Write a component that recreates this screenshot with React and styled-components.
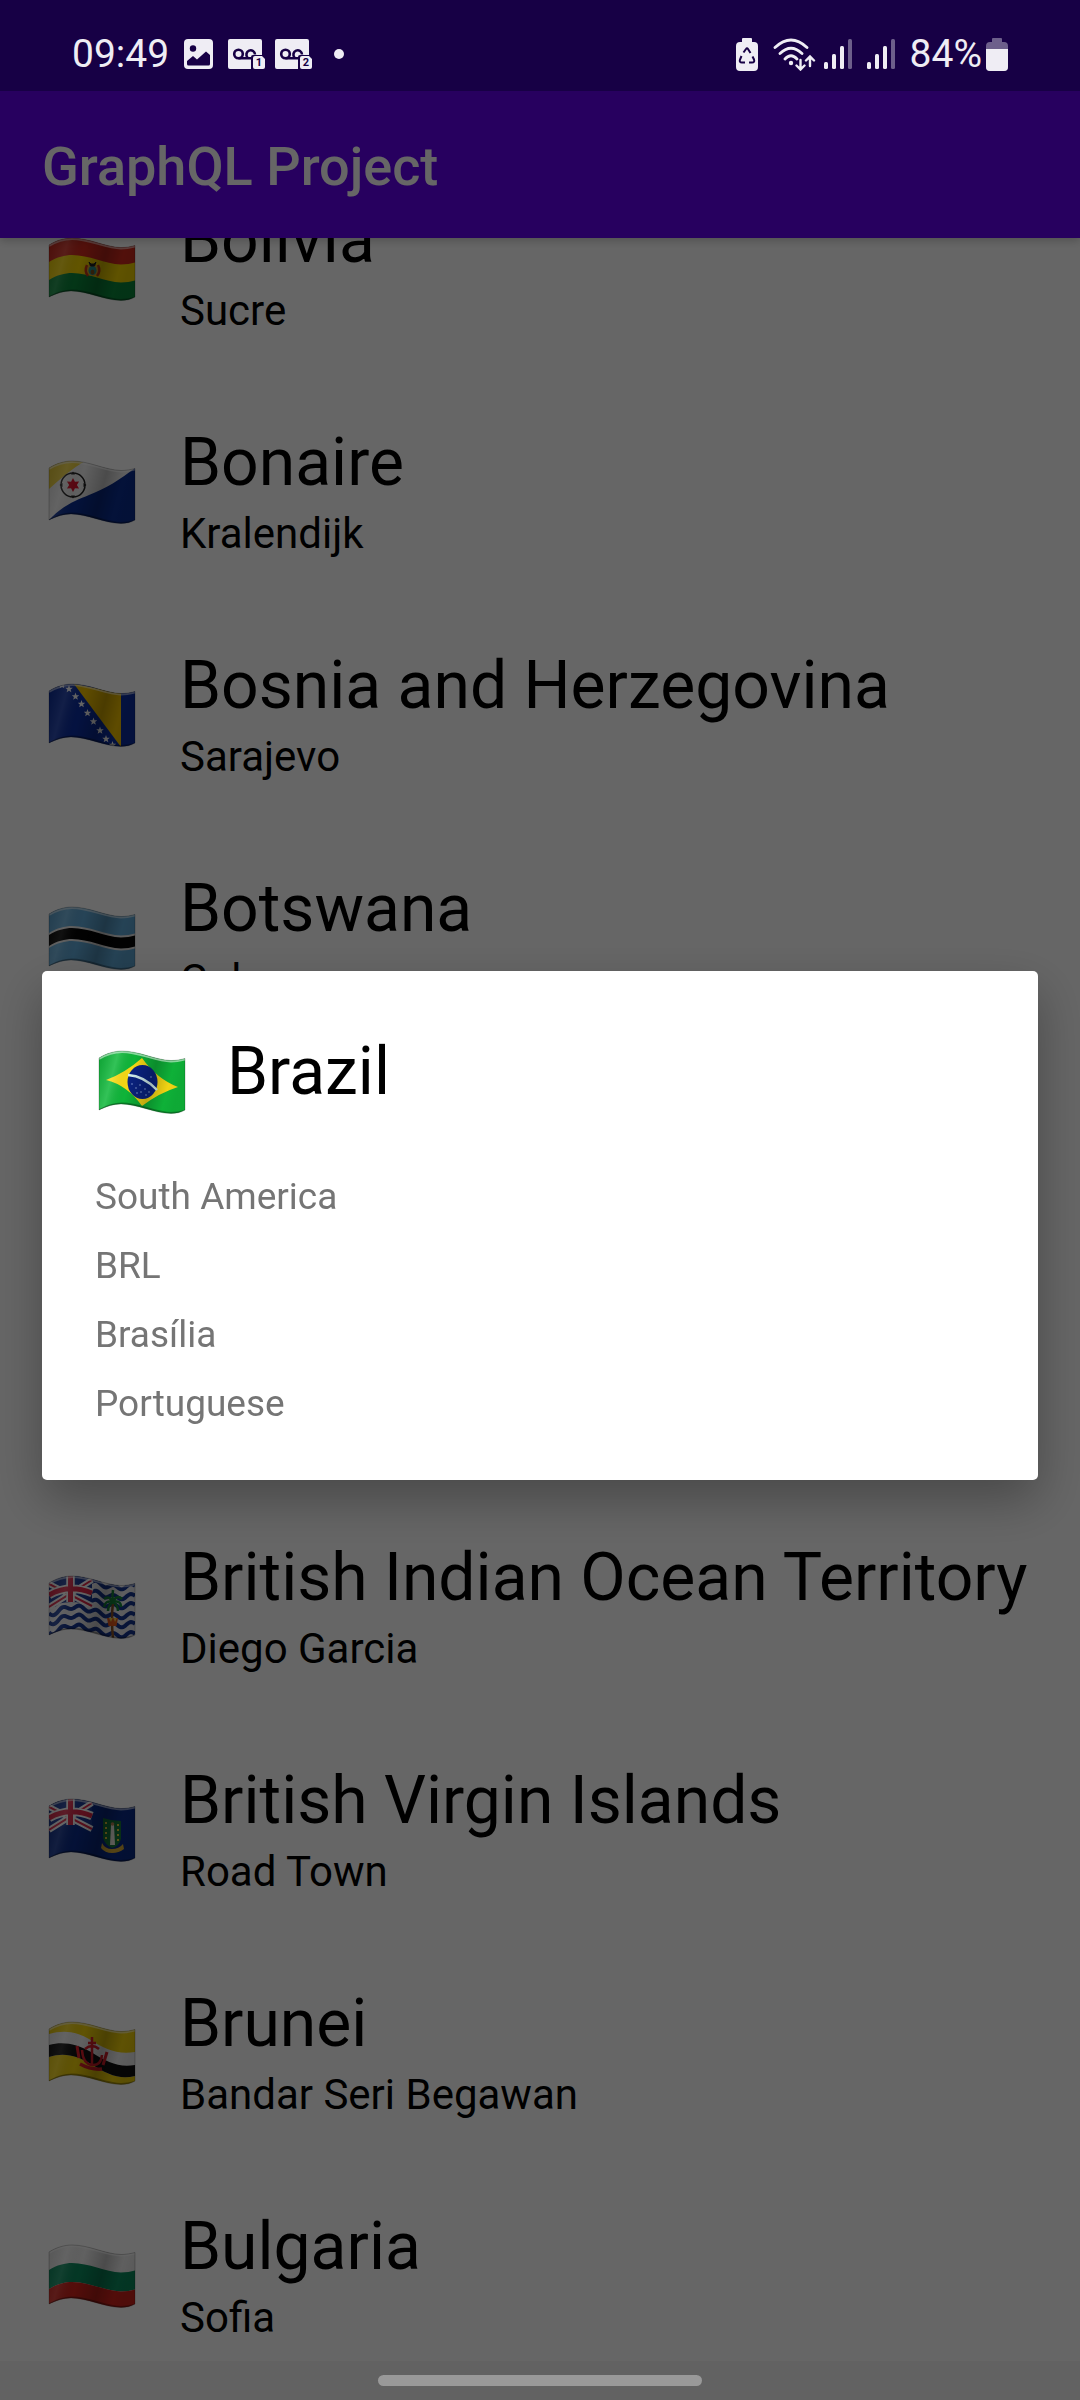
import React from "react";
import styled, { createGlobalStyle } from "styled-components";

const GlobalStyle = createGlobalStyle`
  * { box-sizing: border-box; }
  body {
    margin: 0;
    background: #ffffff;
    font-family: Roboto, "Noto Sans", sans-serif;
  }
`;

const INK = "#efedf4";
const STATUS_BG = "#170045";

const Screen = styled.div`
  display: flex;
  flex-direction: column;
  height: 100vh;
  overflow: hidden;
`;

const StatusBar = styled.header`
  position: relative;
  z-index: 2;
  flex: none;
  display: flex;
  justify-content: space-between;
  align-items: center;
  height: 91px;
  padding: 17px 72px 0;
  background: ${STATUS_BG};
  color: ${INK};
  font-size: 39px;
  line-height: 48px;
`;

const StatusGroup = styled.div`
  display: flex;
  align-items: center;
  gap: ${(p) => p.$gap}px;
`;

const StatusIcon = styled.svg`
  display: block;
  flex: none;
`;

const Dot = styled.span`
  width: 10px;
  height: 10px;
  margin-left: 12px;
  border-radius: 50%;
  background: ${INK};
`;

const AppBar = styled.div`
  position: relative;
  flex: none;
  display: flex;
  align-items: center;
  height: 147px;
  padding: 4px 42px 0;
  background: #6200ee;
  box-shadow: 0 3px 8px rgba(0, 0, 0, 0.2);
`;

const Title = styled.h1`
  margin: 0;
  color: #ffffff;
  font-size: 54px;
  font-weight: 500;
  line-height: 64px;
`;

const List = styled.ul`
  flex: 1;
  min-height: 0;
  overflow: hidden;
  display: flex;
  flex-direction: column;
  justify-content: flex-end;
  margin: 0;
  padding: 0;
  list-style: none;
`;

const ListItem = styled.li`
  flex: none;
  min-height: 223px;
`;

const Row = styled.button`
  display: flex;
  align-items: center;
  gap: 39px;
  width: 100%;
  padding: 66px 45px 15px;
  border: 0;
  background: none;
  color: #000000;
  font-family: inherit;
  text-align: left;
  white-space: nowrap;
`;

const RowText = styled.span`
  display: flex;
  flex-direction: column;
`;

const Name = styled.span`
  font-size: 66px;
  line-height: 86px;
`;

const Capital = styled.span`
  font-size: 42px;
  line-height: 56px;
`;

const NavBar = styled.footer`
  position: relative;
  z-index: 2;
  flex: none;
  display: flex;
  justify-content: center;
  align-items: center;
  height: 39px;
  background: #626262;
`;

const Handle = styled.span`
  width: 30%;
  height: 11px;
  border-radius: 6px;
  background: #999999;
`;

const Backdrop = styled.div`
  position: fixed;
  inset: 0;
  z-index: 1;
  display: flex;
  align-items: center;
  padding: 90px 42px 40px;
  background: rgba(0, 0, 0, 0.6);
`;

const Dialog = styled.section`
  flex: 1;
  padding: 58px 53px 42px;
  border-radius: 5px;
  background: #ffffff;
  box-shadow: 0 20px 50px rgba(0, 0, 0, 0.3);
`;

const DialogHeader = styled.div`
  display: flex;
  align-items: flex-end;
  gap: 36px;
  margin-bottom: 47px;
`;

const DialogTitle = styled.h2`
  margin: 0;
  color: #000000;
  font-size: 66px;
  font-weight: 400;
  line-height: 86px;
`;

const Detail = styled.p`
  margin: 0;
  color: #757575;
  font-size: 37px;
  line-height: 69px;
`;

const FlagSvg = styled.svg`
  display: block;
  flex: none;
`;

/* ---------- flags ---------- */

const OUTLINE =
  "M0 7C8 2 16 0 23 0C40 0 56 9 72 9.5C77 9.5 82 8.5 86 7.5V59C82 61.5 77 62.5 72 62.5C56 62.5 38 53 22 53C15 53 8 55 0 59Z";

const wave = (y) =>
  `M0 ${y + 7}C8 ${y + 2} 16 ${y} 23 ${y}C40 ${y} 56 ${y + 9} 72 ${y + 9.5}C77 ${y + 9.5} 82 ${y + 8.5} 86 ${y + 7.5}`;

function Band({ from, to, color }) {
  const h = to - from;
  return (
    <path
      d={`${wave(from)}v${h}C82 ${to + 8.5} 77 ${to + 9.5} 72 ${to + 9.5}C56 ${to + 9} 40 ${to} 23 ${to}C16 ${to} 8 ${to + 2} 0 ${to + 7}Z`}
      fill={color}
    />
  );
}

function star(cx, cy, r, points, inner) {
  const out = [];
  for (let i = 0; i < points * 2; i += 1) {
    const a = (Math.PI * i) / points - Math.PI / 2;
    const d = i % 2 ? r * inner : r;
    out.push(`${(cx + d * Math.cos(a)).toFixed(2)},${(cy + d * Math.sin(a)).toFixed(2)}`);
  }
  return out.join(" ");
}

function UnionJack() {
  return (
    <g>
      <path d="M0 7C8 2 16 0 23 0C30 0 37 1.5 43 3.5V30C36 27 30 26 22 26C14 26 7 28 0 32Z" fill="#1b3a96" />
      <path d="M0 8L43 30M0 31L43 4" stroke="#ffffff" strokeWidth="6" />
      <path d="M0 8L43 30M0 31L43 4" stroke="#e0284a" strokeWidth="2" />
      <path d="M21.5 0V26M0 19C14 11 28 11 43 17" stroke="#ffffff" strokeWidth="8.5" fill="none" />
      <path d="M21.5 0V26M0 19C14 11 28 11 43 17" stroke="#e0284a" strokeWidth="5" fill="none" />
    </g>
  );
}

function clothHeight(x) {
  if (x < 22) return 3.5 * (1 + Math.cos((Math.PI * x) / 22));
  if (x < 72) return 4.75 * (1 - Math.cos((Math.PI * (x - 22)) / 50));
  return 9.5 - (x - 72) / 7;
}

function ripple(y) {
  const out = [];
  for (let x = 0; x <= 86; x += 1) {
    out.push(`${x},${(y + clothHeight(x) + 2 * Math.cos((2 * Math.PI * (x - 5)) / 17)).toFixed(2)}`);
  }
  return out.join(" ");
}

const art = {
  bo: (
    <>
      <Band from={-2} to={18} color="#d52b1e" />
      <Band from={17} to={36} color="#f9d800" />
      <Band from={35} to={58} color="#0a8a3c" />
      <ellipse cx="43.500" cy="32" rx="6.500" ry="6" fill="#e8b02a" />
      <path d="M38 27q-3 6 1 11M49 27q3 6 -1 11" stroke="#cf3a1a" strokeWidth="2.500" fill="none" />
      <ellipse cx="43.500" cy="32.500" rx="4" ry="4.500" fill="#2a9d9a" />
      <ellipse cx="43.500" cy="34" rx="2" ry="2.500" fill="#8a5a20" />
      <path d="M40 24l1.500 4h4l1.500 -4l-2 2h-3z" fill="#222222" stroke="#222222" />
    </>
  ),
  bq: (
    <>
      <rect width="86" height="64" fill="#f6f6f6" />
      <path d="M0 0H36C24 7 12 17 0 28Z" fill="#f7d93c" />
      <path d="M0 59C14 44 28 39 40 34C56 28 72 18 86 7V64H0Z" fill="#0a2f96" />
      <circle cx="24" cy="24" r="12" stroke="#222222" strokeWidth="1.500" fill="none" />
      <path d="M24 10.500l2 3h-4zM24 37.500l2 -3h-4zM10.500 24l3 2v-4zM37.500 24l-3 2v-4z" fill="#222222" />
      <polygon points={star(24, 24, 7, 6, 0.55)} fill="#e3122c" />
    </>
  ),
  ba: (
    <>
      <rect width="86" height="64" fill="#0b2fa5" />
      <path d="M25 0L72 9V63Z" fill="#f5c400" />
      {[[13, 1], [20, 5], [26.5, 12.5], [32.5, 20], [38.5, 29], [44.5, 37.5], [51, 46.5], [57, 55], [63.5, 61]].map(([x, y]) => (
        <polygon key={x} points={star(x, y, 4, 5, 0.42)} fill="#ffffff" />
      ))}
    </>
  ),
  bw: (
    <>
      <rect width="86" height="64" fill="#62aede" />
      <Band from={19} to={34} color="#f2f2f2" />
      <Band from={21} to={32} color="#050505" />
    </>
  ),
  io: (
    <>
      <rect width="86" height="64" fill="#f4f4f8" />
      {[2, 12, 21, 31, 40, 50].map((y) => (
        <polyline key={y} points={ripple(y)} stroke="#173896" strokeWidth="4" fill="none" />
      ))}
      <UnionJack />
      <path d="M64 26q-2 18 0 36" stroke="#8a5426" strokeWidth="2.500" fill="none" />
      <path
        d="M64 26q-4 -7 -9 -3M64 26q-8 -2 -9 5M64 26q-5 3 -5 9M64 26q-1 -7 0 -12M64 26q4 -8 9 -3M64 26q8 -2 8 5M64 26q5 3 5 9"
        stroke="#158a3c"
        strokeWidth="2.500"
        fill="none"
      />
      <path d="M58 42h11l-1.500 8h-8z" fill="#e85b1c" />
      <path d="M60 42l2 4l2 -5l2 5l2 -4z" fill="#f8d64a" />
    </>
  ),
  vg: (
    <>
      <rect width="86" height="64" fill="#0a2c8c" />
      <UnionJack />
      <path d="M54 19q9 3 18 3v18q-2 7 -9 9q-7 -3 -9 -10z" fill="#157a3c" />
      <path d="M57 23v20M69 25v18" stroke="#f0cf3e" strokeWidth="2" strokeDasharray="2 3" />
      <path d="M62 26q2 -3 3 0l1 20h-5z" fill="#f5f3ea" />
      <circle cx="63.500" cy="25" r="1.800" fill="#c48a5a" />
      <path d="M53 44q3 6 10 6t11 -5l1 5q-5 4 -12 4t-11 -5z" fill="#dfb238" />
    </>
  ),
  bn: (
    <>
      <rect width="86" height="64" fill="#f6d50a" />
      <path d="M0 12C14 8 26 9 40 17C56 27 68 33 86 30V54C70 58 58 52 42 42C28 34 16 30 0 35Z" fill="#f7f7f7" />
      <path d="M0 23C14 19 28 22 42 30C58 40 70 46 86 43V54C70 58 58 52 42 42C28 34 16 30 0 35Z" fill="#111111" />
      <path d="M43 15V42M36 27q7 -6 14 0M39 21h8" stroke="#e3202c" strokeWidth="2.500" fill="none" />
      <path d="M33 28q1 14 10 15t10 -10" stroke="#e3202c" strokeWidth="2.500" fill="none" />
      <path d="M28 24l2 12M58 30l-4 13" stroke="#e3202c" strokeWidth="3" />
      <path d="M31 42q11 6 22 5" stroke="#e3202c" strokeWidth="3.500" fill="none" />
    </>
  ),
  bg: (
    <>
      <Band from={-2} to={19} color="#f7f7f7" />
      <Band from={18} to={37} color="#0a8f60" />
      <Band from={37} to={58} color="#d6241c" />
    </>
  ),
  br: (
    <>
      <rect width="86" height="64" fill="#0fb83a" />
      <path d="M7 29Q26 22 43 7Q58 28 79 36Q60 42 43 55Q28 34 7 29Z" fill="#fbdc14" />
      <ellipse cx="43.500" cy="31" rx="15" ry="17" fill="#0a2383" />
      <path d="M29 24Q45 25 58 39" stroke="#d5f2f2" strokeWidth="2.500" fill="none" />
      {[[33, 33], [37, 37], [41, 34], [42, 41], [46, 38], [50, 41], [47, 44], [38, 42], [52, 26]].map(([x, y]) => (
        <circle key={`${x}-${y}`} cx={x} cy={y} r="0.700" fill="#9fb6ea" />
      ))}
    </>
  ),
};

function Flag({ code, country }) {
  return (
    <FlagSvg width="96" height="67" viewBox="0 0 96 67" role="img" aria-label={`${country} flag`}>
      <defs>
        <clipPath id={`clip-${code}`}>
          <path d={OUTLINE} />
        </clipPath>
        <linearGradient id={`shade-${code}`} x1="0" y1="0" x2="1" y2="0.200">
          <stop offset="0" stopColor="#000000" stopOpacity="0.120" />
          <stop offset="0.220" stopColor="#ffffff" stopOpacity="0.150" />
          <stop offset="0.420" stopColor="#000000" stopOpacity="0.020" />
          <stop offset="0.680" stopColor="#000000" stopOpacity="0.240" />
          <stop offset="0.880" stopColor="#000000" stopOpacity="0.040" />
          <stop offset="1" stopColor="#000000" stopOpacity="0.080" />
        </linearGradient>
      </defs>
      <g transform="translate(4 3)">
        <g clipPath={`url(#clip-${code})`}>
          {art[code]}
          <rect width="86" height="64" fill={`url(#shade-${code})`} />
          <path d={wave(1)} stroke="#ffffff" strokeOpacity="0.500" strokeWidth="2" fill="none" />
          <path d={wave(52.5)} stroke="#000000" strokeOpacity="0.300" strokeWidth="2" fill="none" />
        </g>
        <path d={OUTLINE} stroke="#000000" strokeOpacity="0.300" strokeWidth="0.700" fill="none" />
      </g>
    </FlagSvg>
  );
}

/* ---------- status icons ---------- */

function PictureIcon() {
  return (
    <StatusIcon width="29" height="30" viewBox="0 0 29 30" aria-hidden="true">
      <rect width="29" height="30" rx="4" fill={INK} />
      <circle cx="9" cy="9.500" r="3.200" fill={STATUS_BG} />
      <path d="M3 22l6 -5l4 3.500l9 -8l4 3.500v9q0 1.500 -1.500 1.500h-20q-1.500 0 -1.500 -1.500z" fill={STATUS_BG} />
    </StatusIcon>
  );
}

const SimNumber = styled.text`
  font-family: Roboto, sans-serif;
  font-size: 11px;
  font-weight: 700;
  text-anchor: middle;
  fill: ${STATUS_BG};
`;

function VoicemailIcon({ sim }) {
  return (
    <StatusIcon width="37" height="30" viewBox="0 0 37 30" role="img" aria-label={`Voicemail ${sim}`}>
      <path d="M2 0H32Q34 0 34 2V16H25Q23 16 23 18V30H2Q0 30 0 28V2Q0 0 2 0Z" fill={INK} />
      <circle cx="10.500" cy="15" r="4.300" stroke={STATUS_BG} strokeWidth="2.600" fill="none" />
      <path d="M19.500 18.500A4.300 4.300 0 1 1 27 15.500M10.500 19.300H23" stroke={STATUS_BG} strokeWidth="2.600" fill="none" />
      <path d="M27 17H34L37 20V28Q37 30 35 30H27Q25 30 25 28V19Q25 17 27 17Z" fill={INK} />
      <SimNumber x="31" y="27">{sim}</SimNumber>
    </StatusIcon>
  );
}

const BATTERY = "M7 0H15Q16 0 16 1V4H18Q22 4 22 8V29Q22 33 18 33H4Q0 33 0 29V8Q0 4 4 4H6V1Q6 0 7 0Z";

function BatterySaverIcon() {
  return (
    <StatusIcon width="22" height="33" viewBox="0 0 22 33" aria-hidden="true">
      <path d={BATTERY} fill={INK} />
      <path
        d="M7.500 14.500L10 11Q11 9.500 12 11L14.500 15M16.500 18.500L18 21.500Q19 24.500 16 24.500H13M9 24.500H6Q3 24.500 4 21.500L5.500 18"
        stroke={STATUS_BG}
        strokeWidth="2"
        fill="none"
      />
    </StatusIcon>
  );
}

function WifiIcon() {
  return (
    <StatusIcon width="43" height="33" viewBox="0 0 43 33" aria-hidden="true">
      <g fill="none" stroke={INK} strokeWidth="2.800" strokeLinecap="round">
        <path d="M2 9.500Q18 -5.500 34 9.500M7 15.500Q18 5 29 15.500M12 21Q18 14.500 24 21" />
        <path d="M27.500 22V31M23.500 27.500L27.500 31.500L31.500 27.500M37 28V19M33 22.500L37 18.500L41 22.500" strokeWidth="2.400" />
      </g>
      <circle cx="18" cy="25" r="2.200" fill={INK} />
    </StatusIcon>
  );
}

function SignalIcon() {
  return (
    <StatusIcon width="28" height="30" viewBox="0 0 28 30" aria-hidden="true">
      <g fill={INK}>
        <rect x="0" y="23" width="4" height="7" rx="1.500" />
        <rect x="8" y="15" width="4" height="15" rx="1.500" />
        <rect x="16" y="7" width="4" height="23" rx="1.500" />
        <rect x="24" y="0" width="4" height="30" rx="1.500" fillOpacity="0.400" />
      </g>
    </StatusIcon>
  );
}

function BatteryIcon() {
  return (
    <StatusIcon width="22" height="33" viewBox="0 0 22 33" aria-hidden="true">
      <path d={BATTERY} fill={INK} fillOpacity="0.400" />
      <path d="M0 11H22V29Q22 33 18 33H4Q0 33 0 29Z" fill={INK} />
    </StatusIcon>
  );
}

/* ---------- data ---------- */

const countries = [
  { code: "bo", name: "Bolivia", capital: "Sucre" },
  { code: "bq", name: "Bonaire", capital: "Kralendijk" },
  { code: "ba", name: "Bosnia and Herzegovina", capital: "Sarajevo" },
  { code: "bw", name: "Botswana", capital: "Gaborone" },
  { code: "loading-1" },
  { code: "loading-2" },
  { code: "io", name: "British Indian Ocean Territory", capital: "Diego Garcia" },
  { code: "vg", name: "British Virgin Islands", capital: "Road Town" },
  { code: "bn", name: "Brunei", capital: "Bandar Seri Begawan" },
  { code: "bg", name: "Bulgaria", capital: "Sofia" },
];

const selected = {
  code: "br",
  name: "Brazil",
  details: ["South America", "BRL", "Brasília", "Portuguese"],
};

export default function App() {
  return (
    <Screen>
      <GlobalStyle />
      <StatusBar>
        <StatusGroup $gap={15}>
          <time>09:49</time>
          <PictureIcon />
          <StatusGroup $gap={10}>
            <VoicemailIcon sim="1" />
            <VoicemailIcon sim="2" />
            <Dot />
          </StatusGroup>
        </StatusGroup>
        <StatusGroup $gap={15}>
          <BatterySaverIcon />
          <StatusGroup $gap={8}>
            <WifiIcon />
            <SignalIcon />
          </StatusGroup>
          <SignalIcon />
          <StatusGroup $gap={4}>
            <span>84%</span>
            <BatteryIcon />
          </StatusGroup>
        </StatusGroup>
      </StatusBar>
      <AppBar>
        <Title>GraphQL Project</Title>
      </AppBar>
      <List>
        {countries.map((c) => (
          <ListItem key={c.code}>
            {c.name && (
              <Row type="button">
                <Flag code={c.code} country={c.name} />
                <RowText>
                  <Name>{c.name}</Name>
                  <Capital>{c.capital}</Capital>
                </RowText>
              </Row>
            )}
          </ListItem>
        ))}
      </List>
      <NavBar>
        <Handle />
      </NavBar>
      <Backdrop>
        <Dialog role="dialog" aria-modal="true" aria-labelledby="country-name">
          <DialogHeader>
            <Flag code={selected.code} country={selected.name} />
            <DialogTitle id="country-name">{selected.name}</DialogTitle>
          </DialogHeader>
          {selected.details.map((d) => (
            <Detail key={d}>{d}</Detail>
          ))}
        </Dialog>
      </Backdrop>
    </Screen>
  );
}
